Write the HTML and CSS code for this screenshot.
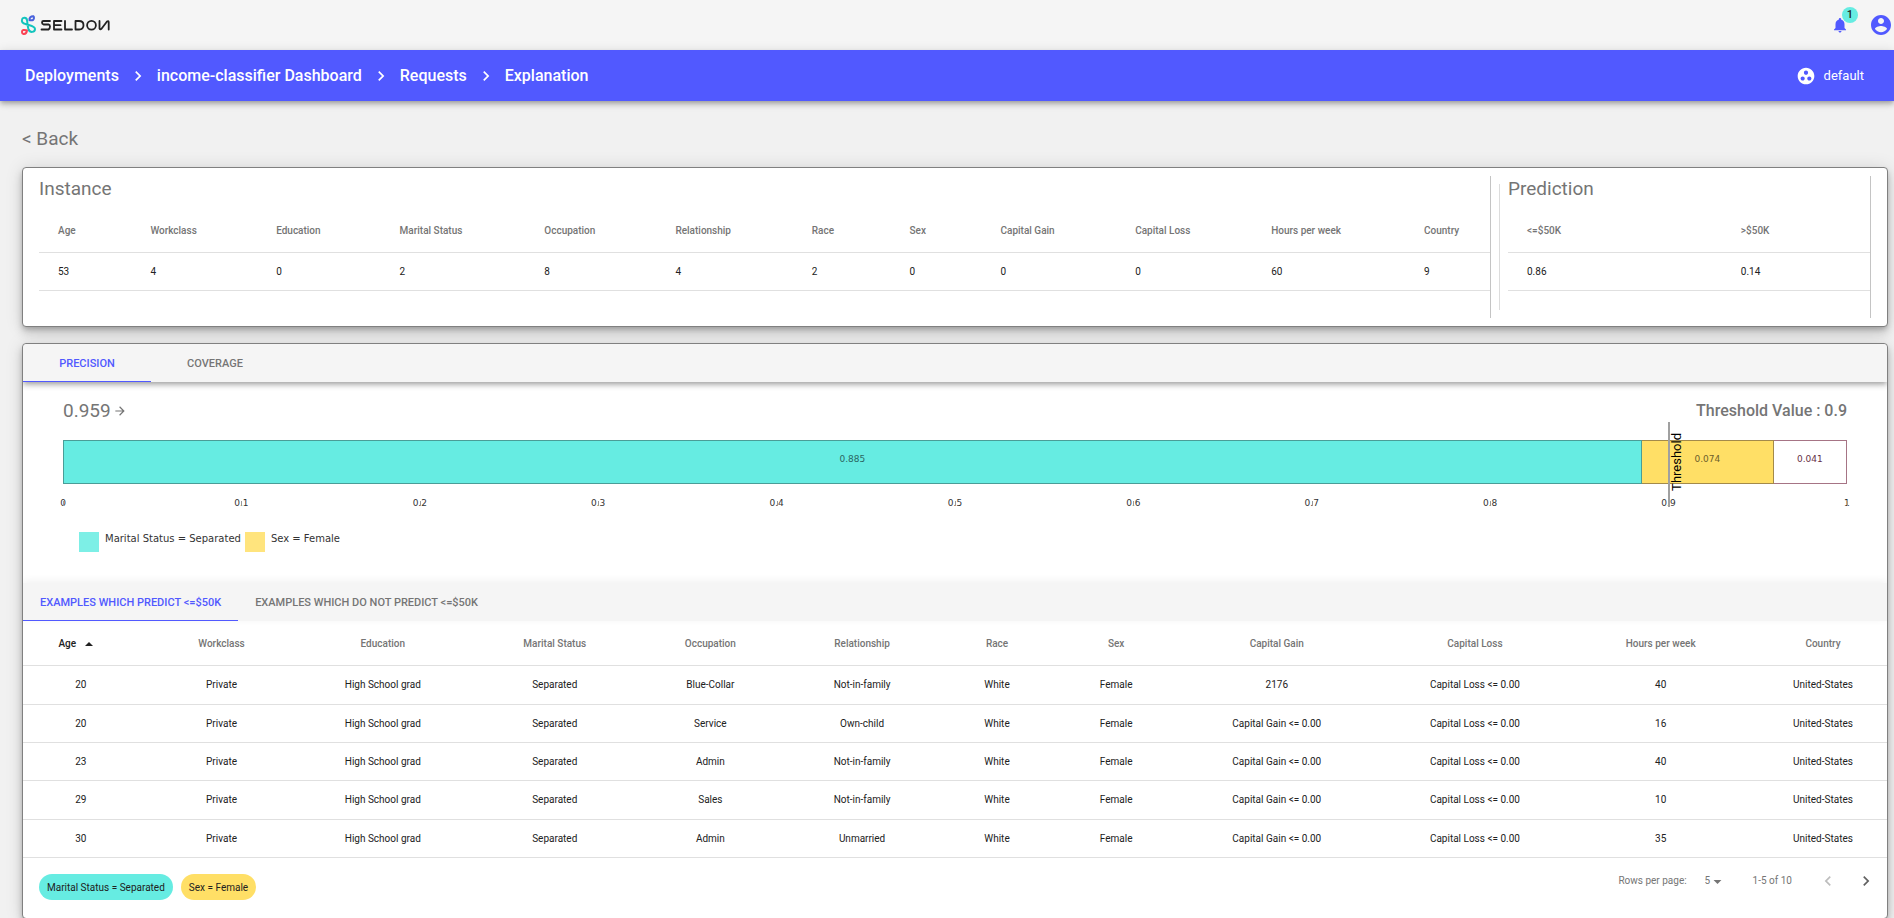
FILE: index.html
```html
<!DOCTYPE html>
<html lang="en">
<head>
<meta charset="utf-8">
<title>Seldon - Explanation</title>
<link rel="stylesheet" href="styles.css">
</head>
<body>
<header class="topbar">
  <a class="logo" href="#" aria-label="Seldon">
    <svg width="90" height="22" viewBox="0 0 90 22" fill="none" stroke-linecap="round" stroke-linejoin="round">
      <g stroke-width="2">
        <path stroke="#12c4bd" d="M5.500 10C2.500 9.500 1.500 7.500 2 5.500C2.500 3 6.500 3 7 6C7.500 9 7.500 12 8.500 15.500C10 19 15 18.500 15 15C15 12 9.500 11.500 5.500 10Z"/>
        <path stroke="#4a63dc" d="M9.500 6.200C9 4 11 2 13.300 2.200C14.500 3 14 5.500 13 6C12 6.500 10.500 6.200 9.500 6.200Z"/>
        <path stroke="#fa4355" d="M7 16.500C6.500 19 5 20.300 3.500 20C1.500 19.500 1.500 16.500 3.300 16C4.800 15.700 6 16.300 7 16.500Z"/>
      </g>
      <g stroke="#222" stroke-width="1.800">
        <path d="M30 7H23.500Q22 7 22 8.500T23.500 10.500H28.500Q30 10.700 30 12.500T28.500 15.500H21.500"/>
        <path d="M41.500 7H34V15.500H41.500M34 11.200H40.500M45 7V15.500H52"/>
        <path d="M55.500 7H59Q63.500 7 63.500 11.200T59 15.500H55.500Z"/>
        <circle cx="71.500" cy="11.200" r="4.400"/>
        <path d="M79.500 7V14.500Q80 16 81.500 14.800L87 7.500Q88.500 6.500 88.700 8V15.500"/>
      </g>
    </svg>
  </a>
  <div class="top-actions">
    <button class="icon-button" aria-label="Notifications">
      <svg width="18" height="18" viewBox="0 0 24 24"><path fill="currentColor" d="M12 22c1.100 0 2-.900 2-2h-4c0 1.100.900 2 2 2zm6-6v-5c0-3.070-1.630-5.640-4.500-6.320V4c0-.830-.670-1.500-1.500-1.500s-1.500.670-1.500 1.500v.680C7.640 5.360 6 7.920 6 11v5l-2 2v1h16v-1l-2-2z"/></svg>
      <span class="badge">1</span>
    </button>
    <button class="icon-button" aria-label="Account">
      <svg width="24" height="24" viewBox="0 0 24 24"><path fill="currentColor" d="M12 2C6.480 2 2 6.480 2 12s4.480 10 10 10 10-4.480 10-10S17.520 2 12 2zm0 3c1.660 0 3 1.340 3 3s-1.340 3-3 3-3-1.340-3-3 1.340-3 3-3zm0 14.200c-2.500 0-4.710-1.280-6-3.220.030-1.990 4-3.080 6-3.080 1.990 0 5.970 1.090 6 3.080-1.290 1.940-3.500 3.220-6 3.220z"/></svg>
    </button>
  </div>
</header>
<nav class="navbar">
  <div class="crumbs">
    <a href="#">Deployments</a>
    <svg width="20" height="20" viewBox="0 0 24 24"><path fill="currentColor" d="M10 6L8.590 7.410 13.170 12l-4.580 4.590L10 18l6-6z"/></svg>
    <a href="#">income-classifier Dashboard</a>
    <svg width="20" height="20" viewBox="0 0 24 24"><path fill="currentColor" d="M10 6L8.590 7.410 13.170 12l-4.580 4.590L10 18l6-6z"/></svg>
    <a href="#">Requests</a>
    <svg width="20" height="20" viewBox="0 0 24 24"><path fill="currentColor" d="M10 6L8.590 7.410 13.170 12l-4.580 4.590L10 18l6-6z"/></svg>
    <a href="#">Explanation</a>
  </div>
  <button class="namespace">
    <svg width="20" height="20" viewBox="0 0 24 24"><path fill="currentColor" d="M12 2C6.480 2 2 6.480 2 12s4.480 10 10 10 10-4.480 10-10S17.520 2 12 2zM8 17.500c-1.380 0-2.500-1.120-2.500-2.500s1.120-2.500 2.500-2.500 2.500 1.120 2.500 2.500-1.120 2.500-2.500 2.500zM9.500 8c0-1.380 1.120-2.500 2.500-2.500s2.500 1.120 2.500 2.500-1.120 2.500-2.500 2.500S9.500 9.380 9.500 8zm6.500 9.500c-1.380 0-2.500-1.120-2.500-2.500s1.120-2.500 2.500-2.500 2.500 1.120 2.500 2.500-1.120 2.500-2.500 2.500z"/></svg>
    default
  </button>
</nav>
<main class="content">
  <a class="back" href="#">&lt; Back</a>
  <section class="card summary">
    <div class="panel instance">
      <h2 class="heading">Instance</h2>
      <table class="table overview">
        <thead><tr><th>Age</th><th>Workclass</th><th>Education</th><th>Marital Status</th><th>Occupation</th><th>Relationship</th><th>Race</th><th>Sex</th><th>Capital Gain</th><th>Capital Loss</th><th>Hours per week</th><th>Country</th></tr></thead>
        <tbody><tr><td>53</td><td>4</td><td>0</td><td>2</td><td>8</td><td>4</td><td>2</td><td>0</td><td>0</td><td>0</td><td>60</td><td>9</td></tr></tbody>
      </table>
    </div>
    <div class="divider"></div>
    <div class="panel prediction">
      <h2 class="heading">Prediction</h2>
      <table class="table overview">
        <thead><tr><th>&lt;=$50K</th><th>&gt;$50K</th></tr></thead>
        <tbody><tr><td>0.86</td><td>0.14</td></tr></tbody>
      </table>
    </div>
  </section>
  <section class="card details">
    <div class="tabs raised" role="tablist">
      <button class="tab wide selected" role="tab" aria-selected="true">PRECISION</button>
      <button class="tab wide" role="tab" aria-selected="false">COVERAGE</button>
    </div>
    <div class="chart">
      <div class="chart-head">
        <span class="value">0.959<svg width="14" height="14" viewBox="0 0 24 24"><path fill="currentColor" d="M12 4l-1.410 1.410L16.170 11H4v2h12.170l-5.580 5.590L12 20l8-8z"/></svg></span>
        <span class="threshold-value">Threshold Value : 0.9</span>
      </div>
      <div class="plot">
        <div class="bar">
          <div class="segment teal" style="width:88.5%">0.885</div>
          <div class="segment yellow" style="width:7.4%">0.074</div>
          <div class="segment rest" style="width:4.1%">0.041</div>
        </div>
        <div class="axis">
          <span>0</span><span>0.1</span><span>0.2</span><span>0.3</span><span>0.4</span><span>0.5</span><span>0.6</span><span>0.7</span><span>0.8</span><span>0.9</span><span>1</span>
        </div>
        <div class="marker" style="left:90%"><span>Threshold</span></div>
      </div>
      <div class="legend">
        <span class="key"><i class="swatch teal"></i>Marital Status = Separated</span>
        <span class="key"><i class="swatch yellow"></i>Sex = Female</span>
      </div>
    </div>
    <div class="tabs lower" role="tablist">
      <button class="tab selected" role="tab" aria-selected="true">EXAMPLES WHICH PREDICT &lt;=$50K</button>
      <button class="tab" role="tab" aria-selected="false">EXAMPLES WHICH DO NOT PREDICT &lt;=$50K</button>
    </div>
    <table class="table examples">
      <thead><tr><th class="sorted"><button class="sort">Age<svg width="16" height="16" viewBox="0 0 24 24"><path fill="currentColor" d="M6 15l6-6 6 6z"/></svg></button></th><th>Workclass</th><th>Education</th><th>Marital Status</th><th>Occupation</th><th>Relationship</th><th>Race</th><th>Sex</th><th>Capital Gain</th><th>Capital Loss</th><th>Hours per week</th><th>Country</th></tr></thead>
      <tbody>
        <tr><td>20</td><td>Private</td><td>High School grad</td><td>Separated</td><td>Blue-Collar</td><td>Not-in-family</td><td>White</td><td>Female</td><td>2176</td><td>Capital Loss &lt;= 0.00</td><td>40</td><td>United-States</td></tr>
        <tr><td>20</td><td>Private</td><td>High School grad</td><td>Separated</td><td>Service</td><td>Own-child</td><td>White</td><td>Female</td><td>Capital Gain &lt;= 0.00</td><td>Capital Loss &lt;= 0.00</td><td>16</td><td>United-States</td></tr>
        <tr><td>23</td><td>Private</td><td>High School grad</td><td>Separated</td><td>Admin</td><td>Not-in-family</td><td>White</td><td>Female</td><td>Capital Gain &lt;= 0.00</td><td>Capital Loss &lt;= 0.00</td><td>40</td><td>United-States</td></tr>
        <tr><td>29</td><td>Private</td><td>High School grad</td><td>Separated</td><td>Sales</td><td>Not-in-family</td><td>White</td><td>Female</td><td>Capital Gain &lt;= 0.00</td><td>Capital Loss &lt;= 0.00</td><td>10</td><td>United-States</td></tr>
        <tr><td>30</td><td>Private</td><td>High School grad</td><td>Separated</td><td>Admin</td><td>Unmarried</td><td>White</td><td>Female</td><td>Capital Gain &lt;= 0.00</td><td>Capital Loss &lt;= 0.00</td><td>35</td><td>United-States</td></tr>
      </tbody>
    </table>
    <footer class="card-foot">
      <div class="chips">
        <span class="chip teal">Marital Status = Separated</span>
        <span class="chip yellow">Sex = Female</span>
      </div>
      <div class="pager">
        <label for="rows">Rows per page:</label>
        <span class="select-wrap">
          <select id="rows"><option>5</option><option>10</option></select>
          <svg width="19" height="19" viewBox="0 0 24 24"><path fill="currentColor" d="M7 10l5 5 5-5z"/></svg>
        </span>
        <span class="range">1-5 of 10</span>
        <button class="page" aria-label="Previous page" disabled><svg width="20" height="20" viewBox="0 0 24 24"><path fill="currentColor" d="M15.410 7.410L14 6l-6 6 6 6 1.410-1.410L10.830 12z"/></svg></button>
        <button class="page" aria-label="Next page"><svg width="20" height="20" viewBox="0 0 24 24"><path fill="currentColor" d="M10 6L8.590 7.410 13.170 12l-4.580 4.590L10 18l6-6z"/></svg></button>
      </div>
    </footer>
  </section>
</main>
</body>
</html>
```
FILE: styles.css
```css
* { box-sizing: border-box; }
body { margin: 0; background: #f1f1f1; color: #212121; font: 10px/14px Roboto, sans-serif; overflow: hidden; }
a { color: inherit; text-decoration: none; }
button, select { font: inherit; color: inherit; background: none; border: 0; padding: 0; }
svg { display: block; flex: none; }

.topbar { display: flex; align-items: center; justify-content: space-between; height: 50px; padding: 0 1px 0 20px; background: #f5f5f5; }
.top-actions { display: flex; align-items: center; gap: 20px; color: #5159ff; }
.icon-button { position: relative; }
.badge { position: absolute; top: -9px; left: 11px; width: 16px; height: 16px; border-radius: 50%; background: #66ece2; color: #212121; font-size: 11px; font-weight: 500; line-height: 16px; text-align: center; }

.navbar { position: relative; display: flex; align-items: center; justify-content: space-between; height: 51px; padding: 0 30px 0 25px; background: #5159ff; color: #fff; box-shadow: 0 2px 4px -1px rgba(0,0,0,.2), 0 4px 5px rgba(0,0,0,.14), 0 1px 10px rgba(0,0,0,.12); }
.crumbs { display: flex; align-items: center; gap: 9px; font-size: 16px; font-weight: 500; line-height: 24px; }
.namespace { display: flex; align-items: center; gap: 8px; font-size: 13px; }

.content { padding: 25px 6px 0 22px; }
.back { display: inline-block; font-size: 19px; line-height: 26px; color: #757575; }
.card { background: #fff; border: 1px solid #808080; border-radius: 4px; box-shadow: 0 3px 5px -1px rgba(0,0,0,.2), 0 6px 10px rgba(0,0,0,.14), 0 1px 18px rgba(0,0,0,.12); }
.heading { margin: 0; font-size: 19px; font-weight: 400; line-height: 26px; color: #757575; }

.summary { display: flex; height: 160px; margin-top: 15px; padding: 8px 16px; }
.panel { border-right: 1px solid #c4c4c4; }
.instance { flex: 1; }
.prediction { width: 363px; }
.divider { width: 1px; margin: 8px; background: #dcdcdc; }

.table { width: 100%; border-collapse: separate; border-spacing: 0; }
.table th, .table td { padding: 0 43px 0 19px; border-bottom: 1px solid #e0e0e0; text-align: left; white-space: nowrap; }
.table th:last-child, .table td:last-child { padding-right: 19px; }
.table th { height: 51px; font-weight: 500; color: #757575; }
.table td { height: 38px; }
.overview th { padding-top: 7px; }

.details { margin-top: 16px; overflow: clip; }
.tabs { display: flex; height: 38px; background: #f5f5f5; }
.raised { border-radius: 4px 4px 0 0; box-shadow: 0 2px 4px -1px rgba(0,0,0,.2), 0 4px 5px rgba(0,0,0,.14), 0 1px 10px rgba(0,0,0,.12); }
.lower { box-shadow: 0 -2px 8px rgba(0,0,0,.06); }
.tab { padding: 2px 17px 0; border-bottom: 1px solid transparent; font-size: 11px; font-weight: 500; color: #757575; }
.wide { min-width: 128px; }
.selected { color: #5159ff; border-color: #5159ff; }

.chart { height: 201px; padding: 16px 40px 0; }
.chart-head { display: flex; align-items: center; justify-content: space-between; line-height: 26px; color: #757575; }
.value { display: flex; align-items: center; gap: 2px; font-size: 19px; }
.threshold-value { font-size: 16px; font-weight: 500; }
.plot { position: relative; padding-top: 16px; font: 9px/12px "DejaVu Sans", sans-serif; }
.bar { display: flex; height: 44px; }
.segment { display: flex; flex: none; align-items: center; justify-content: center; padding-bottom: 6px; border: 1px solid; border-left-width: 0; }
.segment:first-child { border-left-width: 1px; }
.teal { background: #66ece2; }
.yellow { background: #ffdf66; }
.segment.teal { border-color: #4a9d97; color: #2b6661; }
.segment.yellow { border-color: #a38a4a; color: #6e602c; }
.segment.rest { border-color: #a67485; color: #673147; }
.axis { display: flex; justify-content: space-between; margin-top: 13px; color: #333; }
.axis span { position: relative; display: flex; justify-content: center; width: 0; }
.axis span::after { content: ""; position: absolute; top: 4px; left: 0; width: 1px; height: 5px; background: #999; }
.marker { position: absolute; top: -2px; height: 85px; margin-left: -1px; border-left: 2px solid #a0a0a0; color: #000; }
.marker span { position: absolute; left: 0; bottom: 16px; writing-mode: vertical-rl; transform: rotate(180deg); font: 13px/14px Roboto, sans-serif; }
.legend { display: flex; gap: 4px; margin: 23px 0 0 16px; font: 10px/14px "DejaVu Sans", sans-serif; color: #333; }
.key { display: flex; gap: 6px; }
.swatch { width: 20px; height: 20px; opacity: .85; }

.examples th, .examples td { text-align: center; }
.examples th { height: 45px; padding-top: 2px; }
.examples tbody tr:nth-child(3n+1) td { height: 39px; }
.examples .sorted { color: #212121; }
.sort { display: inline-flex; align-items: center; gap: 5px; padding-right: 6px; font-weight: 500; }

.card-foot { display: flex; justify-content: space-between; height: 60px; padding: 0 11px 0 16px; }
.chips { display: flex; gap: 8px; padding-top: 16px; }
.chip { height: 26px; padding: 1px 8px 0; border-radius: 13px; line-height: 26px; }
.pager { display: flex; align-items: center; height: 46px; color: #757575; }
.select-wrap { position: relative; display: flex; align-items: center; margin: 0 26px 0 18px; }
.select-wrap select { width: 22px; appearance: none; }
.select-wrap svg { position: absolute; left: 3px; pointer-events: none; }
.range { margin-right: 26px; }
.page { color: #616161; }
.page + .page { margin-left: 18px; }
.page:disabled { color: #bdbdbd; }
```
